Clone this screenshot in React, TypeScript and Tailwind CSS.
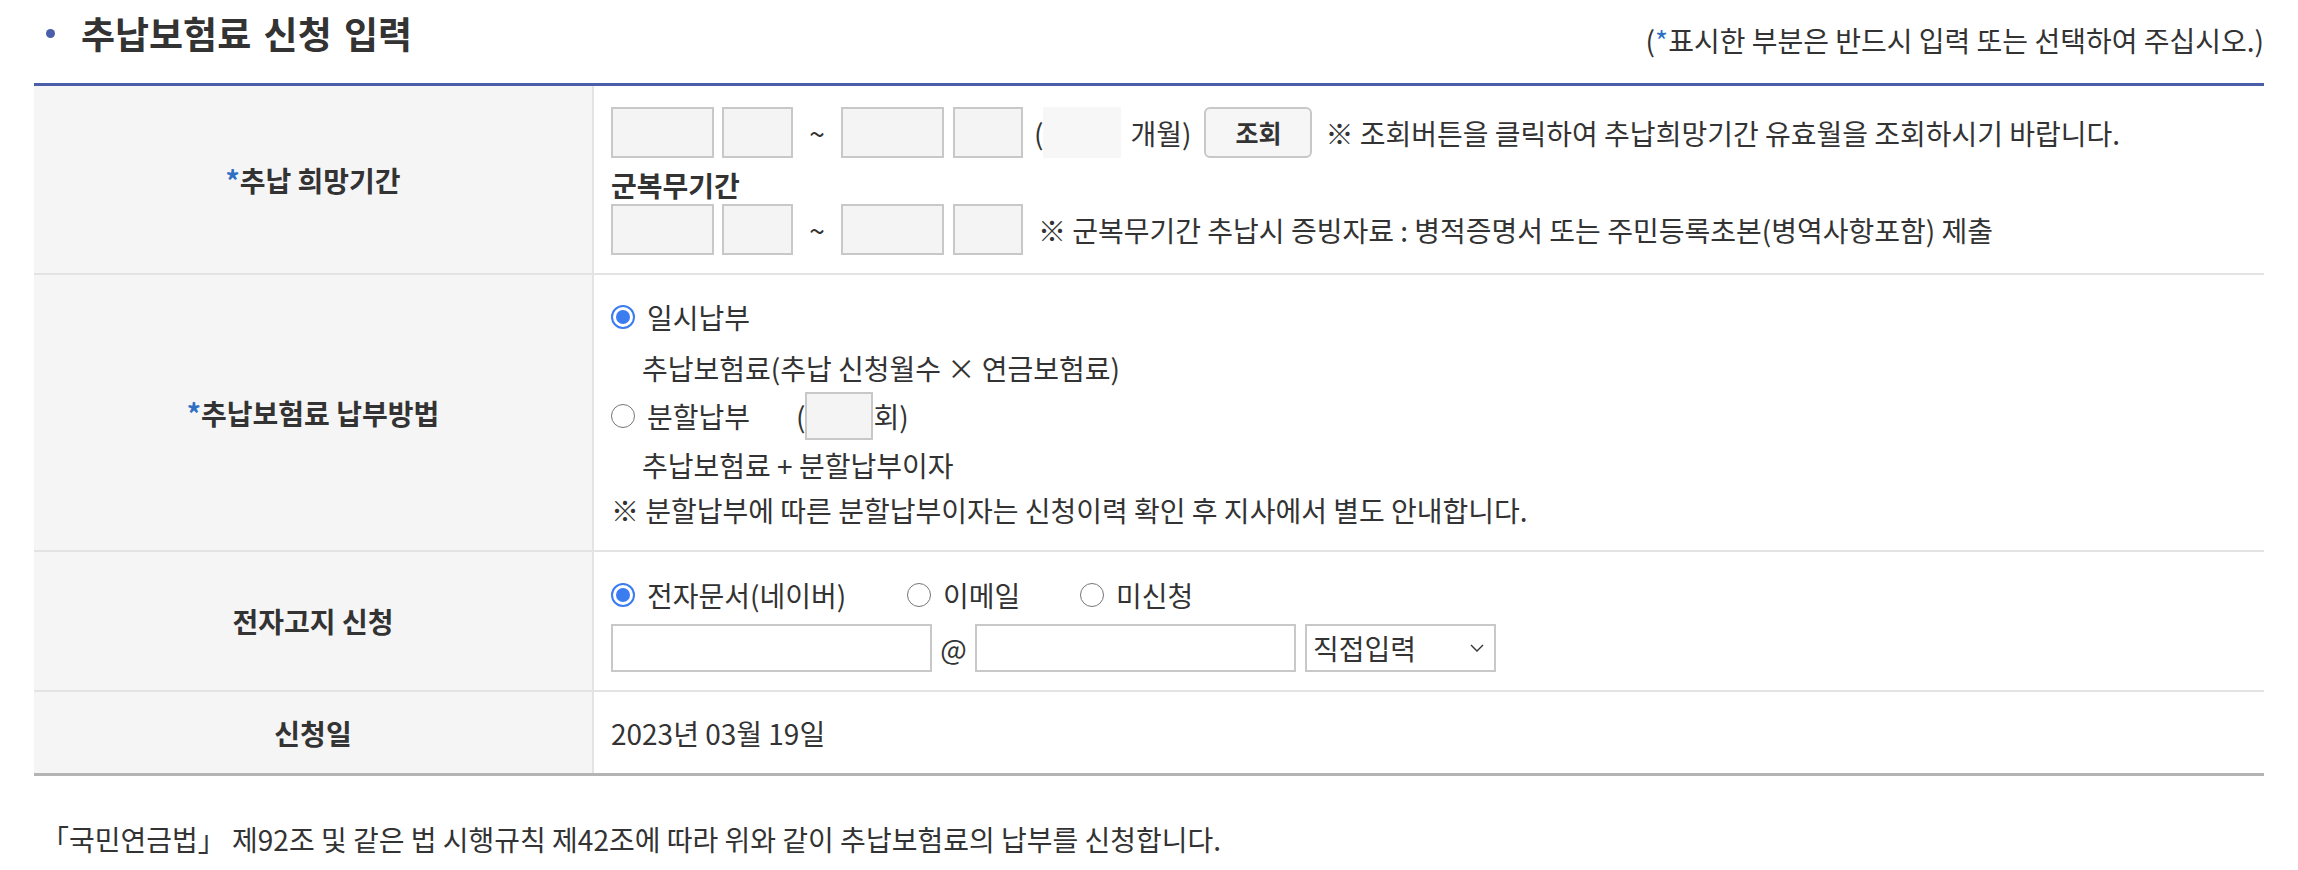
import React from 'react';

function Radio({ checked }: { checked?: boolean }) {
    if (checked) {
        return (
            <span className="w-[24px] h-[24px] rounded-full border-2 border-[#3b7cf0] flex items-center justify-center shrink-0 bg-white">
                <span className="w-[14px] h-[14px] rounded-full bg-[#3b7cf0]" />
            </span>
        );
    }
    return <span className="block w-[24px] h-[24px] rounded-full border-[1.5px] border-[#767676] shrink-0 bg-white" />;
}

function Row({ label, required, last, children }: { label: string; required?: boolean; last?: boolean; children: React.ReactNode }) {
    return (
        <div className={last ? 'flex border-b-[3px] border-[#b4b4b4]' : 'flex border-b-2 border-[#e3e3e3]'}>
            <div className="w-[560px] shrink-0 bg-[#f5f5f5] border-r-2 border-[#e3e3e3] flex items-center justify-center font-bold">
                {required && <span className="text-[#2f6fc4]">*</span>}
                {label}
            </div>
            <div className="flex-1 pl-[17px]">{children}</div>
        </div>
    );
}

export default function App() {
    const grayInput = 'h-[51px] border-2 border-[#c8c8c8] bg-[#f4f4f4] shrink-0';

    return (
        <div className="px-[34px] text-[28px] text-[#333] font-['Noto_Sans_CJK_KR','Noto_Sans',sans-serif] bg-white min-h-[870px]">
            {/* header */}
            <div className="flex justify-between h-[83px]">
                <div className="mt-[13px] h-[40px] flex items-center pl-[12px]">
                    <span className="w-[9px] h-[9px] rounded-full bg-[#4a5ea9]" />
                    <h1 className="ml-[26px] text-[37px] font-bold leading-[40px] [word-spacing:4px]">추납보험료 신청 입력</h1>
                </div>
                <div className="mt-[23px] leading-[34px]">
                    (<span className="text-[#2f6fc4]">*</span>표시한 부분은 반드시 입력 또는 선택하여 주십시오.)
                </div>
            </div>

            <div className="border-t-[3px] border-[#4a5ea9]">
                {/* 추납 희망기간 */}
                <Row label="추납 희망기간" required>
                    <div className="pt-[21px] pb-[18px]">
                        <div className="flex items-center h-[51px]">
                            <input className={`${grayInput} w-[103px]`} />
                            <input className={`${grayInput} ml-[8px] w-[71px]`} />
                            <span className="w-[48px] text-center">~</span>
                            <input className={`${grayInput} w-[103px]`} />
                            <input className={`${grayInput} ml-[9px] w-[70px]`} />
                            <span className="ml-[11px]">(</span>
                            <span className="w-[78px] h-[51px] bg-[#f7f7f7]" />
                            <span className="ml-[9px]">개월)</span>
                            <button className="ml-[13px] w-[108px] h-[51px] border-2 border-[#c8c8c8] rounded-[6px] bg-[#f6f6f6] font-bold text-[25px]">
                                조회
                            </button>
                            <span className="ml-[13px]">※ 조회버튼을 클릭하여 추납희망기간 유효월을 조회하시기 바랍니다.</span>
                        </div>
                        <div className="mt-[8px] h-[38px] leading-[38px] font-bold">군복무기간</div>
                        <div className="flex items-center h-[51px]">
                            <input className={`${grayInput} w-[103px]`} />
                            <input className={`${grayInput} ml-[8px] w-[71px]`} />
                            <span className="w-[48px] text-center">~</span>
                            <input className={`${grayInput} w-[103px]`} />
                            <input className={`${grayInput} ml-[9px] w-[70px]`} />
                            <span className="ml-[15px]">※ 군복무기간 추납시 증빙자료 : 병적증명서 또는 주민등록초본(병역사항포함) 제출</span>
                        </div>
                    </div>
                </Row>

                {/* 납부방법 */}
                <Row label="추납보험료 납부방법" required>
                    <div className="pt-[20px] pb-[18px]">
                        <div className="flex items-center h-[44px]">
                            <Radio checked />
                            <span className="ml-[12px]">일시납부</span>
                        </div>
                        <div className="mt-[7px] h-[44px] flex items-center pl-[31px]">추납보험료(추납 신청월수 × 연금보험료)</div>
                        <div className="mt-[2px] flex items-center h-[48px]">
                            <div className="w-[185px] flex items-center">
                                <Radio />
                                <span className="ml-[12px]">분할납부</span>
                            </div>
                            <span>(</span>
                            <input className="w-[68px] h-[48px] border-2 border-[#c8c8c8] bg-[#f4f4f4]" />
                            <span>회)</span>
                        </div>
                        <div className="mt-[3px] h-[44px] flex items-center pl-[31px]">추납보험료 + 분할납부이자</div>
                        <div className="mt-[1px] h-[44px] flex items-center">※ 분할납부에 따른 분할납부이자는 신청이력 확인 후 지사에서 별도 안내합니다.</div>
                    </div>
                </Row>

                {/* 전자고지 */}
                <Row label="전자고지 신청">
                    <div className="pt-[21px] pb-[18px]">
                        <div className="flex items-center h-[44px]">
                            <div className="w-[296px] flex items-center">
                                <Radio checked />
                                <span className="ml-[12px]">전자문서(네이버)</span>
                            </div>
                            <div className="w-[173px] flex items-center">
                                <Radio />
                                <span className="ml-[12px]">이메일</span>
                            </div>
                            <div className="flex items-center">
                                <Radio />
                                <span className="ml-[12px]">미신청</span>
                            </div>
                        </div>
                        <div className="mt-[7px] flex items-center h-[48px]">
                            <input className="w-[321px] h-[48px] border-2 border-[#c8c8c8] bg-white" />
                            <span className="w-[43px] text-center">@</span>
                            <input className="w-[321px] h-[48px] border-2 border-[#c8c8c8] bg-white" />
                            <div className="ml-[9px] w-[191px] h-[48px] border-2 border-[#c8c8c8] flex items-center justify-between pl-[6px] pr-[10px]">
                                <span>직접입력</span>
                                <svg width="14" height="10" viewBox="0 0 14 10" fill="none" stroke="#333" strokeWidth="1.4">
                                    <path d="M1 2 L7 8 L13 2" />
                                </svg>
                            </div>
                        </div>
                    </div>
                </Row>

                {/* 신청일 */}
                <Row label="신청일" last>
                    <div className="h-[81px] flex items-center">2023년 03월 19일</div>
                </Row>
            </div>

            <p className="mt-[43px] leading-[40px] pl-[7px]">
                「국민연금법」 제92조 및 같은 법 시행규칙 제42조에 따라 위와 같이 추납보험료의 납부를 신청합니다.
            </p>
        </div>
    );
}
